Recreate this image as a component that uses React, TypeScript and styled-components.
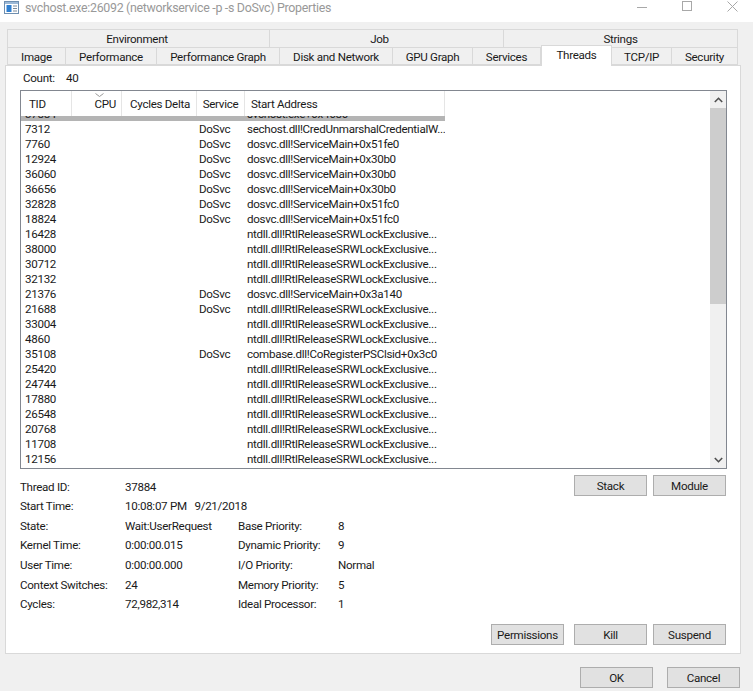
import React from "react";
import styled, { createGlobalStyle } from "styled-components";

const GlobalStyle = createGlobalStyle`
html, body {
	margin: 0;
	padding: 0;
	background: #f0f0f0;
}
body {
	font-family: "Roboto", "Noto Sans", sans-serif;
	font-size: 11.6px;
	letter-spacing: -0.3px;
	color: #1a1a1a;
}
`;

const topTabs = ["Environment", "Job", "Strings"];
const bottomTabs = [
	{ label: "Image", width: 59 },
	{ label: "Performance", width: 91 },
	{ label: "Performance Graph", width: 123 },
	{ label: "Disk and Network", width: 113 },
	{ label: "GPU Graph", width: 80 },
	{ label: "Services", width: 68 },
	{ label: "Threads", width: 71, active: true },
	{ label: "TCP/IP", width: 60 },
	{ label: "Security", width: 66 },
];

const R = "ntdll.dll!RtlReleaseSRWLockExclusive...";
const rows: [string, string, string][] = [
	["7312", "DoSvc", "sechost.dll!CredUnmarshalCredentialW..."],
	["7760", "DoSvc", "dosvc.dll!ServiceMain+0x51fe0"],
	["12924", "DoSvc", "dosvc.dll!ServiceMain+0x30b0"],
	["36060", "DoSvc", "dosvc.dll!ServiceMain+0x30b0"],
	["36656", "DoSvc", "dosvc.dll!ServiceMain+0x30b0"],
	["32828", "DoSvc", "dosvc.dll!ServiceMain+0x51fc0"],
	["18824", "DoSvc", "dosvc.dll!ServiceMain+0x51fc0"],
	["16428", "", R],
	["38000", "", R],
	["30712", "", R],
	["32132", "", R],
	["21376", "DoSvc", "dosvc.dll!ServiceMain+0x3a140"],
	["21688", "DoSvc", R],
	["33004", "", R],
	["4860", "", R],
	["35108", "DoSvc", "combase.dll!CoRegisterPSClsid+0x3c0"],
	["25420", "", R],
	["24744", "", R],
	["17880", "", R],
	["26548", "", R],
	["20768", "", R],
	["11708", "", R],
	["12156", "", R],
];

const infoRows = [
	["Thread ID:", "37884", "", ""],
	["Start Time:", "10:08:07 PM   9/21/2018", "", ""],
	["State:", "Wait:UserRequest", "Base Priority:", "8"],
	["Kernel Time:", "0:00:00.015", "Dynamic Priority:", "9"],
	["User Time:", "0:00:00.000", "I/O Priority:", "Normal"],
	["Context Switches:", "24", "Memory Priority:", "5"],
	["Cycles:", "72,982,314", "Ideal Processor:", "1"],
];

export default function App() {
	return (
		<Window>
			<GlobalStyle />
			<TitleBar>
				<AppIcon viewBox="0 0 15 13">
					<rect x="0.5" y="0.5" width="14" height="12" fill="#fff" stroke="#6f8fb0" />
					<rect x="1" y="1" width="13" height="2" fill="#9db9d6" />
					<rect x="2.5" y="4" width="5" height="7" fill="#2f7fd0" />
					<rect x="9" y="4.5" width="4" height="1" fill="#7a8a9a" />
					<rect x="9" y="7" width="4" height="1" fill="#7a8a9a" />
					<rect x="9" y="9.5" width="4" height="1" fill="#7a8a9a" />
				</AppIcon>
				<Title>svchost.exe:26092 (networkservice -p -s DoSvc) Properties</Title>
				<WindowControls>
					<svg width="10" height="10" viewBox="0 0 10 10">
						<path d="M0 6.5H10" stroke="#a8a8a8" />
					</svg>
					<svg width="10" height="10" viewBox="0 0 10 10">
						<rect x="0.5" y="0.5" width="9" height="9" fill="none" stroke="#a8a8a8" />
					</svg>
					<svg width="11" height="11" viewBox="0 0 11 11">
						<path d="M0.5 0.5L10.5 10.5M10.5 0.5L0.5 10.5" stroke="#a8a8a8" />
					</svg>
				</WindowControls>
			</TitleBar>

			<Tabs>
				<TopTabRow>
					{topTabs.map((t) => (
						<TopTab key={t} $shift={t === "Job" ? 14 : 0}>
							{t}
						</TopTab>
					))}
				</TopTabRow>
				<BottomTabRow>
					{bottomTabs.map((t) => (
						<BottomTab key={t.label} $width={t.width} $active={t.active}>
							{t.label}
						</BottomTab>
					))}
				</BottomTabRow>
			</Tabs>

			<Panel>
				<CountLine>
					<CountLabel>Count:</CountLabel>
					<span>40</span>
				</CountLine>

				<ListBox>
					<ListBody>
						<Header>
							<HeaderCell $width={51} $pad={8}>TID</HeaderCell>
							<HeaderCell $width={50} $align="right" $pad={5}>
								<SortMark viewBox="0 0 9 4">
									<path d="M0.5 0.5L4.5 3.5L8.5 0.5" fill="none" stroke="#999" />
								</SortMark>
								CPU
							</HeaderCell>
							<HeaderCell $width={75} $align="right" $pad={6}>Cycles Delta</HeaderCell>
							<HeaderCell $width={48} $align="center" $pad={0}>Service</HeaderCell>
							<HeaderCell $width={200} $pad={6}>Start Address</HeaderCell>
						</Header>
						<RowsClip>
							<Rows>
								<Row $selected>
									<TidCell>37884</TidCell>
									<ServiceCell />
									<AddressCell>svchost.exe+0x4680</AddressCell>
								</Row>
								{rows.map(([tid, service, address]) => (
									<Row key={tid}>
										<TidCell>{tid}</TidCell>
										<ServiceCell>{service}</ServiceCell>
										<AddressCell>{address}</AddressCell>
									</Row>
								))}
							</Rows>
						</RowsClip>
					</ListBody>
					<ScrollBar>
						<ScrollButton>
							<svg width="9" height="6" viewBox="0 0 9 6">
								<path d="M0.8 5L4.5 1.3L8.2 5" fill="none" stroke="#505050" strokeWidth="1.6" />
							</svg>
						</ScrollButton>
						<ScrollTrack>
							<ScrollThumb />
						</ScrollTrack>
						<ScrollButton>
							<svg width="9" height="6" viewBox="0 0 9 6">
								<path d="M0.8 1L4.5 4.7L8.2 1" fill="none" stroke="#505050" strokeWidth="1.6" />
							</svg>
						</ScrollButton>
					</ScrollBar>
				</ListBox>

				<Details>
					<InfoColumn>
						{infoRows.map(([label, value, label2, value2]) => (
							<InfoRow key={label}>
								<InfoLabel>{label}</InfoLabel>
								<InfoValue>{value}</InfoValue>
								<InfoLabel2>{label2}</InfoLabel2>
								<span>{value2}</span>
							</InfoRow>
						))}
					</InfoColumn>
					<ActionColumn>
						<ButtonRow>
							<Button>Stack</Button>
							<Button>Module</Button>
						</ButtonRow>
						<ButtonRow>
							<Button $apart>Permissions</Button>
							<Button>Kill</Button>
							<Button>Suspend</Button>
						</ButtonRow>
					</ActionColumn>
				</Details>
			</Panel>

			<DialogButtons>
				<DialogButton>OK</DialogButton>
				<DialogButton>Cancel</DialogButton>
			</DialogButtons>
		</Window>
	);
}

const Window = styled.div`
width: 753px;
height: 691px;
overflow: hidden;
background: #f0f0f0;
display: flex;
flex-direction: column;
`;

const TitleBar = styled.div`
height: 22px;
background: #fff;
display: flex;
align-items: flex-start;
padding: 0 15px 0 4px;
box-sizing: border-box;
`;

const AppIcon = styled.svg`
width: 15px;
height: 13px;
margin-top: 1px;
`;

const Title = styled.span`
margin-left: 6px;
font-size: 12.4px;
letter-spacing: -0.3px;
line-height: 15px;
color: #999;
white-space: nowrap;
`;

const WindowControls = styled.div`
margin-left: auto;
display: flex;
gap: 35px;
margin-top: 1px;

svg {
	display: block;
}
`;

const Tabs = styled.div`
margin: 7px 15px 0 7px;
display: flex;
flex-direction: column;
`;

const TopTabRow = styled.div`
display: grid;
grid-template-columns: 263px 234px 234px;
`;

const TopTab = styled.div<{ $shift: number }>`
height: 18px;
line-height: 19px;
text-align: center;
background: #f0f0f0;
border: 1px solid #d9d9d9;
border-left: 0;
border-bottom: 0;
box-sizing: border-box;
padding-right: ${(p) => p.$shift}px;

&:first-child {
	border-left: 1px solid #d9d9d9;
	padding-right: 3px;
}
`;

const BottomTabRow = styled.div`
display: flex;
height: 18px;
position: relative;
z-index: 1;
`;

const BottomTab = styled.div<{ $width: number; $active?: boolean }>`
width: ${(p) => p.$width}px;
flex: none;
box-sizing: border-box;
text-align: center;
border: 1px solid #d9d9d9;
border-left: 0;
background: #f0f0f0;
height: 18px;
line-height: 18px;

&:first-child {
	border-left: 1px solid #d9d9d9;
}

${(p) =>
	p.$active &&
	`
	background: #fff;
	border: 1px solid #d9d9d9;
	border-bottom: 0;
	height: 21px;
	margin-top: -2px;
	line-height: 19px;
	`}
`;

const Panel = styled.div`
margin-left: 5px;
width: 736px;
height: 589px;
box-sizing: border-box;
background: #fff;
border: 1px solid #d9d9d9;
padding: 0 13px 8px 14px;
display: flex;
flex-direction: column;
`;

const CountLine = styled.div`
height: 24px;
display: flex;
align-items: center;
padding-left: 3px;
`;

const CountLabel = styled.span`
width: 43px;
`;

const ListBox = styled.div`
width: 707px;
height: 379px;
box-sizing: border-box;
border: 1px solid #828790;
display: flex;
flex: none;
`;

const ListBody = styled.div`
flex: 1;
min-width: 0;
display: flex;
flex-direction: column;
overflow: hidden;
`;

const Header = styled.div`
height: 25px;
flex: none;
display: flex;
width: 424px;
background: #fff;
`;

const HeaderCell = styled.div<{ $width: number; $align?: string; $pad: number }>`
position: relative;
width: ${(p) => p.$width}px;
box-sizing: border-box;
border-right: 1px solid #e5e5e5;
padding: 0 ${(p) => p.$pad}px;
text-align: ${(p) => p.$align || "left"};
line-height: 26px;
white-space: nowrap;
`;

const SortMark = styled.svg`
position: absolute;
left: 23px;
top: 2px;
width: 9px;
height: 4px;
`;

const RowsClip = styled.div`
flex: 1;
overflow: hidden;
`;

const Rows = styled.div`
margin-top: -10px;
`;

const Row = styled.div<{ $selected?: boolean }>`
display: flex;
width: 424px;
height: 15px;
line-height: 17px;
white-space: nowrap;
background: ${(p) => (p.$selected ? "#b4b4b4" : "transparent")};
`;

const TidCell = styled.div`
width: 176px;
padding-left: 4px;
box-sizing: border-box;
`;

const ServiceCell = styled.div`
width: 48px;
padding-left: 2px;
box-sizing: border-box;
`;

const AddressCell = styled.div`
width: 200px;
padding-left: 2px;
box-sizing: border-box;
overflow: hidden;
`;

const ScrollBar = styled.div`
width: 16px;
flex: none;
display: flex;
flex-direction: column;
background: #f0f0f0;
`;

const ScrollButton = styled.div`
height: 17px;
flex: none;
display: flex;
align-items: center;
justify-content: center;
`;

const ScrollTrack = styled.div`
flex: 1;
`;

const ScrollThumb = styled.div`
height: 196px;
background: #cdcdcd;
`;

const Details = styled.div`
flex: 1;
display: flex;
`;

const InfoColumn = styled.div`
width: 450px;
padding-top: 9.6px;
display: flex;
flex-direction: column;
gap: 3.6px;
`;

const InfoRow = styled.div`
display: flex;
height: 16px;
line-height: 16px;
white-space: nowrap;
`;

const InfoLabel = styled.span`
width: 105px;
`;

const InfoValue = styled.span`
width: 113px;
white-space: pre;
`;

const InfoLabel2 = styled.span`
width: 100px;
`;

const ActionColumn = styled.div`
flex: 1;
display: flex;
flex-direction: column;
justify-content: space-between;
padding: 6px 0 0;
`;

const ButtonRow = styled.div`
display: flex;
justify-content: flex-end;
gap: 6px;
padding-right: 1px;
`;

const Button = styled.div<{ $apart?: boolean }>`
width: 73px;
height: 21px;
box-sizing: border-box;
border: 1px solid #adadad;
background: #e1e1e1;
text-align: center;
line-height: 20px;
margin-right: ${(p) => (p.$apart ? "4px" : "0")};
`;

const DialogButtons = styled.div`
margin-top: 13px;
display: flex;
justify-content: flex-end;
gap: 14px;
padding-right: 13px;
`;

const DialogButton = styled(Button)``;
